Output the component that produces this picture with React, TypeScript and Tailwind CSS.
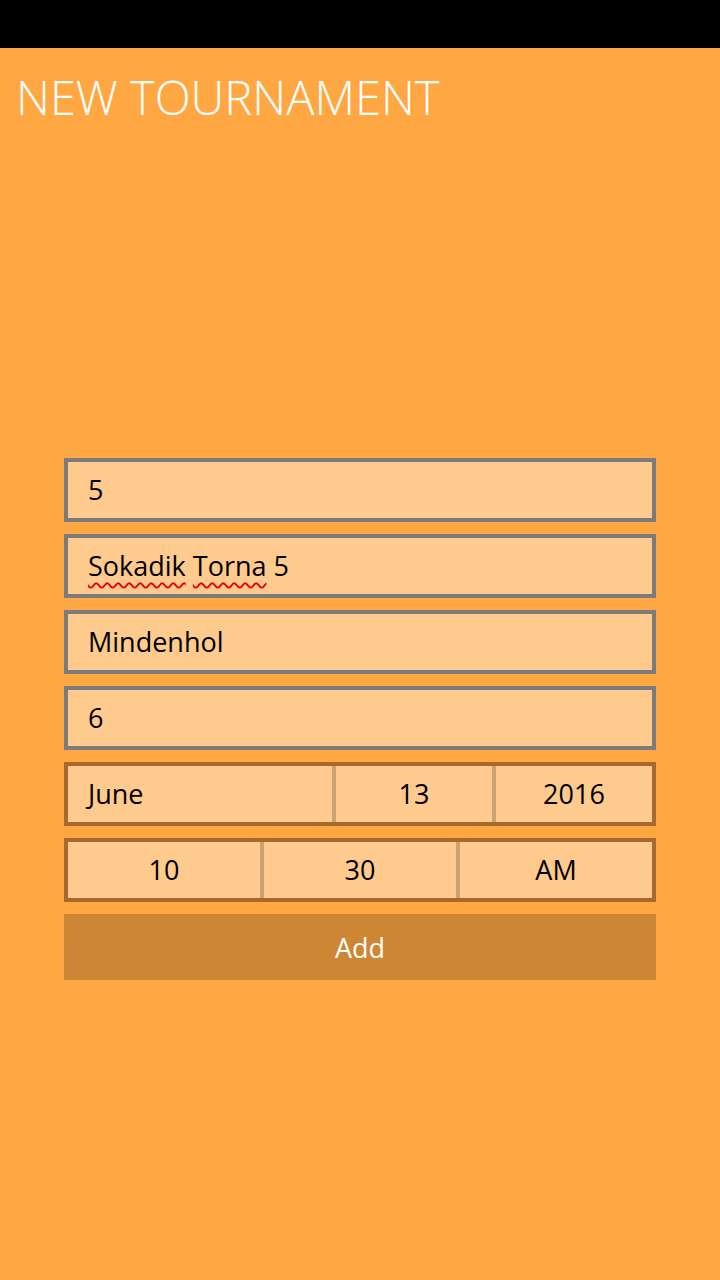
import React from 'react';

const font = { fontFamily: '"Open Sans", "Noto Sans", sans-serif' };

const TextBox = ({ children }: { children: React.ReactNode }) => (
  <div className="flex h-16 items-center border-4 border-[#7b7b7b] bg-[#ffca8d] pl-[20px] text-[27px] text-black">
    {children}
  </div>
);

const App: React.FC = () => {
  return (
    <div className="flex min-h-[1280px] w-[720px] flex-col bg-[#ffa843]" style={font}>
      <div className="h-12 bg-black" />
      <h1 className="pl-[16px] pt-[19px] text-[47px] font-light leading-[60px] text-white">NEW TOURNAMENT</h1>

      <div className="mt-[331px] flex flex-col gap-3 px-16">
        <TextBox>5</TextBox>
        <TextBox>
          <span className="underline decoration-red-600 decoration-wavy decoration-2 underline-offset-[6px]">Sokadik</span>
          <span>&nbsp;</span>
          <span className="underline decoration-red-600 decoration-wavy decoration-2 underline-offset-[6px]">Torna</span>
          <span>&nbsp;5</span>
        </TextBox>
        <TextBox>Mindenhol</TextBox>
        <TextBox>6</TextBox>

        <div className="flex h-16 border-4 border-[#a56b2e] bg-[#ffca8d] text-[27px] text-black">
          <div className="flex w-[264px] items-center pl-[20px]">June</div>
          <div className="w-[4px] bg-[#c9a271]" />
          <div className="flex flex-1 items-center justify-center">13</div>
          <div className="w-[4px] bg-[#c9a271]" />
          <div className="flex flex-1 items-center justify-center">2016</div>
        </div>

        <div className="flex h-16 border-4 border-[#a56b2e] bg-[#ffca8d] text-[27px] text-black">
          <div className="flex flex-1 items-center justify-center">10</div>
          <div className="w-[4px] bg-[#c9a271]" />
          <div className="flex flex-1 items-center justify-center">30</div>
          <div className="w-[4px] bg-[#c9a271]" />
          <div className="flex flex-1 items-center justify-center">AM</div>
        </div>

        <button className="flex h-[66px] items-center justify-center bg-[#cd8634] pt-[2px] text-[27px] text-white">
          Add
        </button>
      </div>
    </div>
  );
};

export default App;
